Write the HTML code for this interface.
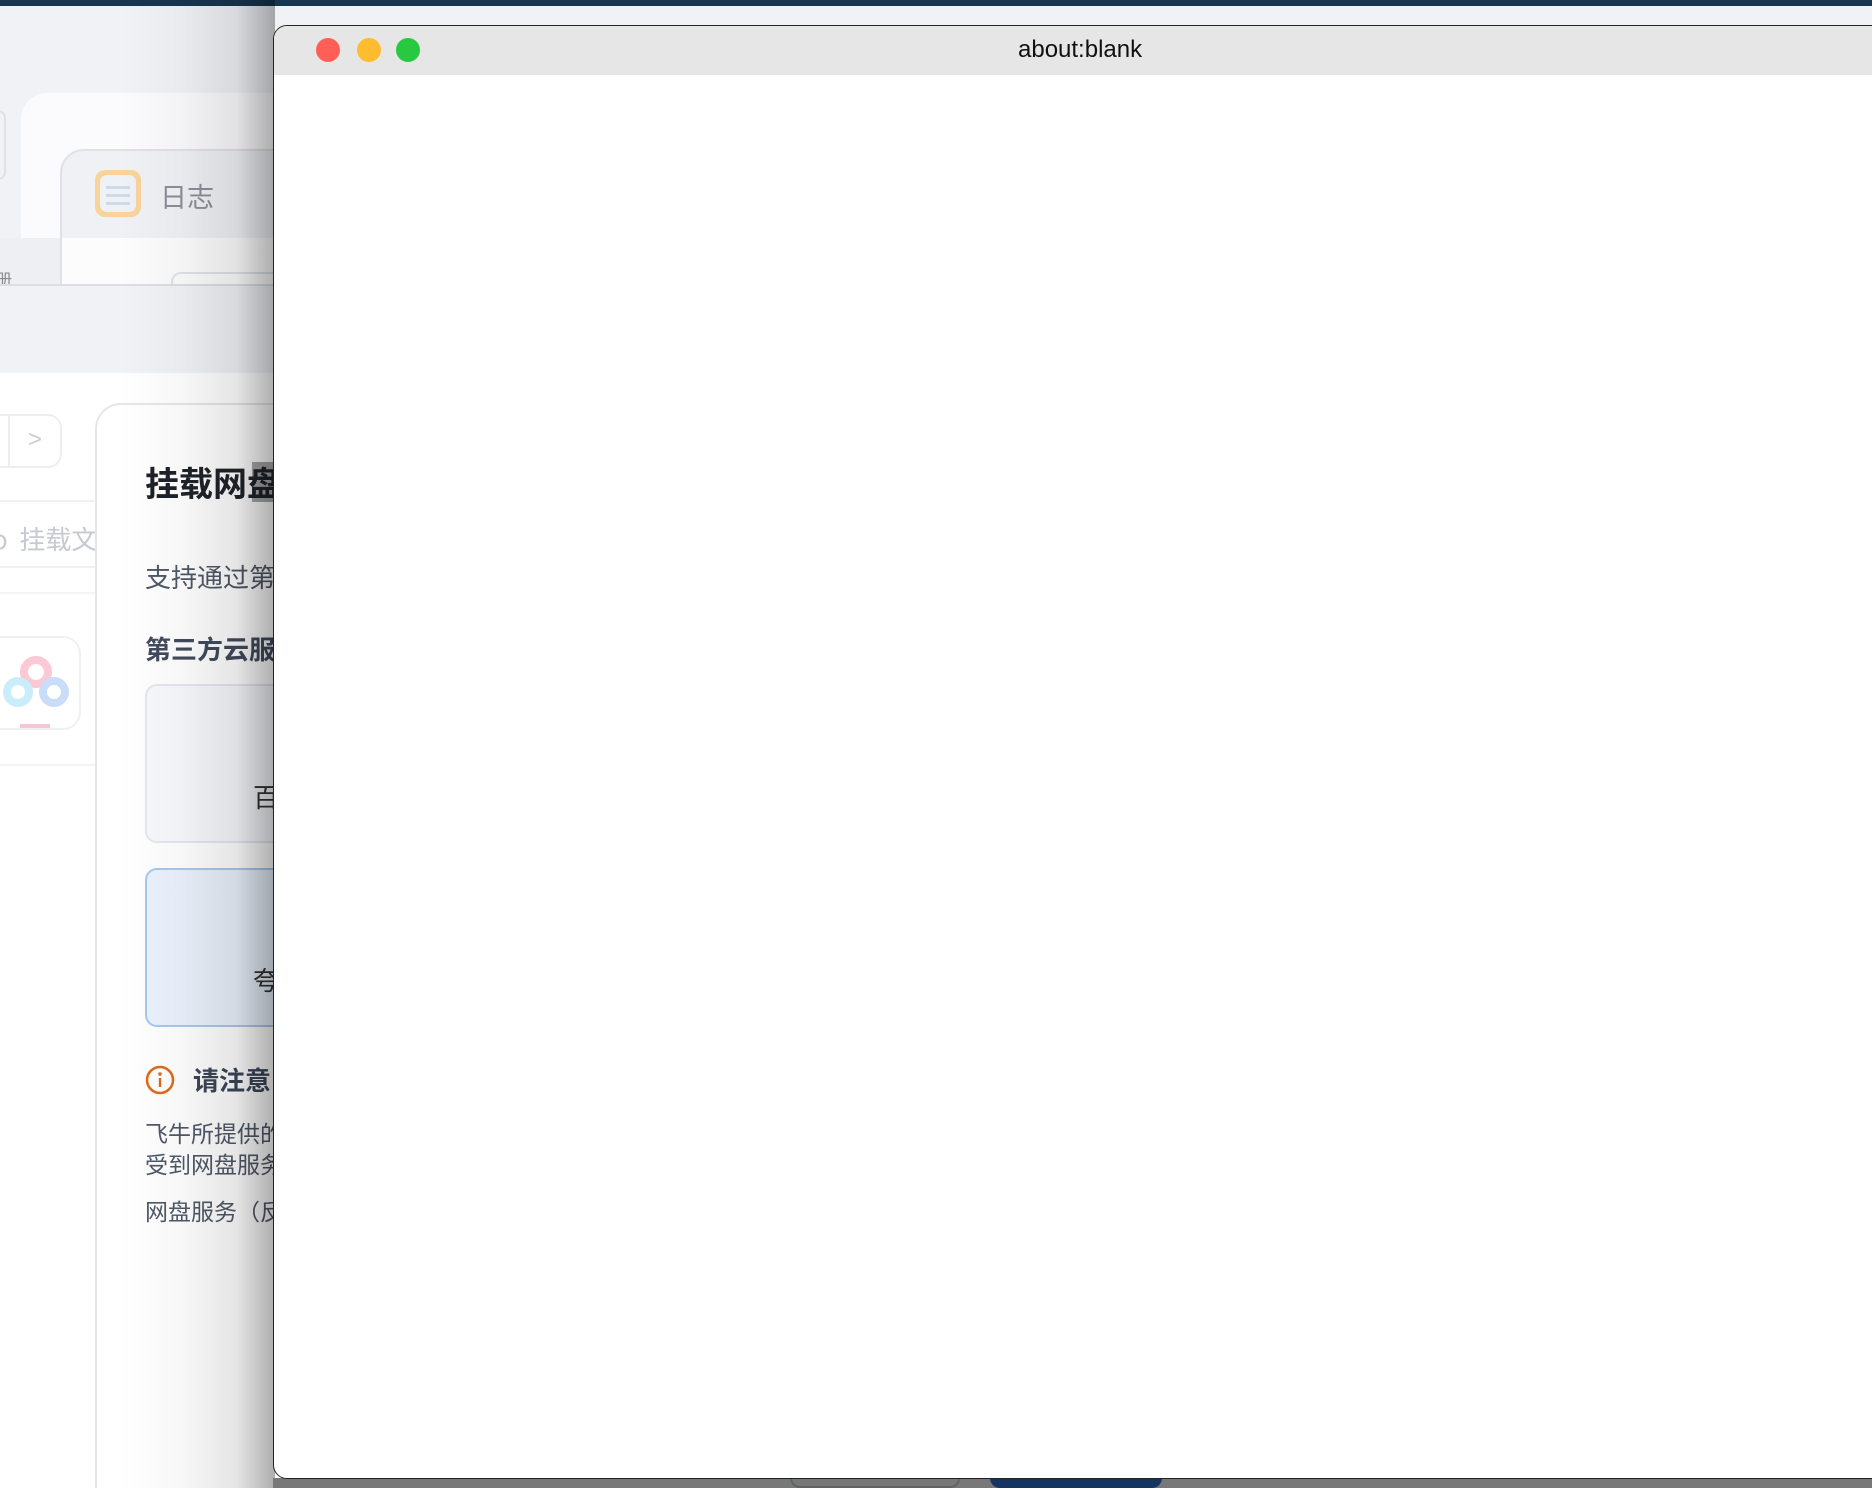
<!DOCTYPE html>
<html><head><meta charset="utf-8"><style>
*{margin:0;padding:0;box-sizing:border-box}
html,body{width:1872px;height:1488px;overflow:hidden}
#w{width:1872px;height:1488px;overflow:hidden;position:relative;background:#f1f2f6;font-family:"Liberation Sans","Noto Sans CJK SC",sans-serif}
.a{position:absolute}
.cjk{font-family:"Noto Sans CJK SC",sans-serif;white-space:nowrap}
</style></head><body><div id="w">
<div class="a" style="left:0;top:0;width:1872px;height:6px;background:#173650"></div>
<div class="a" style="left:21px;top:93px;width:400px;height:260px;background:#fbfbfd;border-radius:26px 0 0 0"></div>
<div class="a" style="left:-20px;top:110px;width:26px;height:70px;border:2px solid #dfe1e6;border-radius:8px"></div>
<div class="a" style="left:60px;top:149px;width:400px;height:200px;background:#f0f1f5;border:2px solid #e0e2e7;border-radius:24px 0 0 0"></div>
<div class="a" style="left:62px;top:238px;width:400px;height:50px;background:#fcfcfd"></div>
<div class="a" style="left:0;top:238px;width:60px;height:48px;background:#eeeff3"></div>
<div class="a cjk" style="left:-4px;top:266px;font-size:16px;color:#888">册</div>
<div class="a" style="left:95px;top:170px;width:46px;height:47px;border-radius:10px;background:#f9d39a"></div>
<div class="a" style="left:100px;top:175px;width:36px;height:37px;border-radius:7px;background:#eef2f7"></div>
<div class="a" style="left:106px;top:186px;width:24px;height:3px;background:#cfdbe8;box-shadow:0 8px 0 #cfdbe8,0 16px 0 #cfdbe8"></div>
<div class="a cjk" style="left:160px;top:176px;font-size:27px;color:#8a8f99">日志</div>
<div class="a" style="left:171px;top:272px;width:120px;height:20px;border:2px solid #dfe2e8;border-radius:10px"></div>
<div class="a" style="left:0;top:284px;width:300px;height:2px;background:#dcdee3"></div>
<div class="a" style="left:0;top:286px;width:300px;height:87px;background:#f1f2f6"></div>
<div class="a" style="left:0;top:373px;width:300px;height:1115px;background:#fff"></div>
<div class="a" style="left:-20px;top:414px;width:82px;height:54px;border:2px solid #eceef2;border-radius:14px"></div>
<div class="a" style="left:8px;top:414px;width:2px;height:54px;background:#eceef2"></div>
<div class="a" style="left:28px;top:426px;font-size:24px;color:#c8ccd3">&gt;</div>
<div class="a" style="left:0;top:500px;width:100px;height:2px;background:#f0f1f3"></div>
<div class="a cjk" style="left:-8px;top:520px;font-size:26px;color:#c6c9cf">o&nbsp; 挂载文</div>
<div class="a" style="left:0;top:566px;width:100px;height:2px;background:#f0f1f3"></div>
<div class="a" style="left:0;top:592px;width:100px;height:2px;background:#f5f5f7"></div>
<div class="a" style="left:-20px;top:636px;width:101px;height:94px;border:2px solid #eff0f3;border-radius:18px"></div>
<svg class="a" style="left:0;top:650px" width="80" height="80"><circle cx="36" cy="22" r="12" fill="none" stroke="#fbc8d6" stroke-width="8"/><circle cx="18" cy="42" r="11" fill="none" stroke="#c9eef9" stroke-width="8"/><circle cx="54" cy="42" r="11" fill="none" stroke="#c9dcf8" stroke-width="8"/><rect x="20" y="74" width="30" height="4" fill="#f7c6d3"/></svg>
<div class="a" style="left:0;top:764px;width:100px;height:2px;background:#f4f4f6"></div>
<div class="a" style="left:95px;top:403px;width:400px;height:1100px;background:#fff;border:2px solid #e4e6ea;border-radius:26px 0 0 0"></div>
<div class="a" style="left:252px;top:462px;width:21px;height:40px;background:#a8a8a8"></div>
<div class="a cjk" style="left:145px;top:457px;font-size:34px;font-weight:bold;color:#1f2329">挂载网盘</div>
<div class="a cjk" style="left:145px;top:558px;font-size:26px;color:#4f5867">支持通过第三方</div>
<div class="a cjk" style="left:145px;top:630px;font-size:26px;font-weight:bold;color:#414b5c">第三方云服务</div>
<div class="a" style="left:145px;top:684px;width:200px;height:159px;background:#f8f9fc;border:2px solid #e3e8f0;border-radius:12px"></div>
<div class="a cjk" style="left:253px;top:778px;font-size:26px;color:#333">百度</div>
<div class="a" style="left:145px;top:868px;width:200px;height:159px;background:#eaf2fd;border:2px solid #a9c7f1;border-radius:12px"></div>
<div class="a cjk" style="left:253px;top:961px;font-size:26px;color:#333">夸克</div>
<svg class="a" style="left:144px;top:1064px" width="32" height="32"><circle cx="16" cy="16" r="13" fill="none" stroke="#e06a1b" stroke-width="2.5"/><circle cx="16" cy="10" r="1.8" fill="#e06a1b"/><rect x="14.8" y="14" width="2.4" height="9" fill="#e06a1b"/></svg>
<div class="a cjk" style="left:193px;top:1061px;font-size:26px;font-weight:bold;color:#3c4657">请注意</div>
<div class="a cjk" style="left:145px;top:1117px;font-size:23px;color:#4f5867;line-height:31px">飞牛所提供的网<br>受到网盘服务商</div>
<div class="a cjk" style="left:145px;top:1193px;font-size:23px;color:#4f5867">网盘服务（反</div>
<div class="a" style="left:120px;top:0;width:155px;height:1488px;background:linear-gradient(to right,rgba(0,0,0,0),rgba(0,0,0,0.03) 40%,rgba(0,0,0,0.1) 75%,rgba(0,0,0,0.32))"></div>
<div class="a" style="left:273px;top:1478px;width:1600px;height:10px;background:#787878"></div>
<div class="a" style="left:790px;top:1478px;width:170px;height:10px;border:2px solid #5f6368;border-top:none;border-radius:0 0 10px 10px"></div>
<div class="a" style="left:990px;top:1478px;width:172px;height:10px;background:#143462;border-radius:0 0 12px 12px"></div>
<div class="a" style="left:273px;top:25px;width:1640px;height:1454px;background:#fff;border:1.5px solid #222;border-radius:14px;overflow:hidden">
<div style="height:49px;background:#e6e6e6;position:relative">
<div class="a" style="left:42px;top:12px;width:24px;height:24px;border-radius:50%;background:#ff5f57"></div>
<div class="a" style="left:83px;top:12px;width:24px;height:24px;border-radius:50%;background:#febc2e"></div>
<div class="a" style="left:122px;top:12px;width:24px;height:24px;border-radius:50%;background:#28c840"></div>
<div class="a" style="left:744px;top:10px;font-size:24px;color:#111;font-family:'Liberation Sans',sans-serif">about:blank</div>
</div></div>
</div></body></html>
